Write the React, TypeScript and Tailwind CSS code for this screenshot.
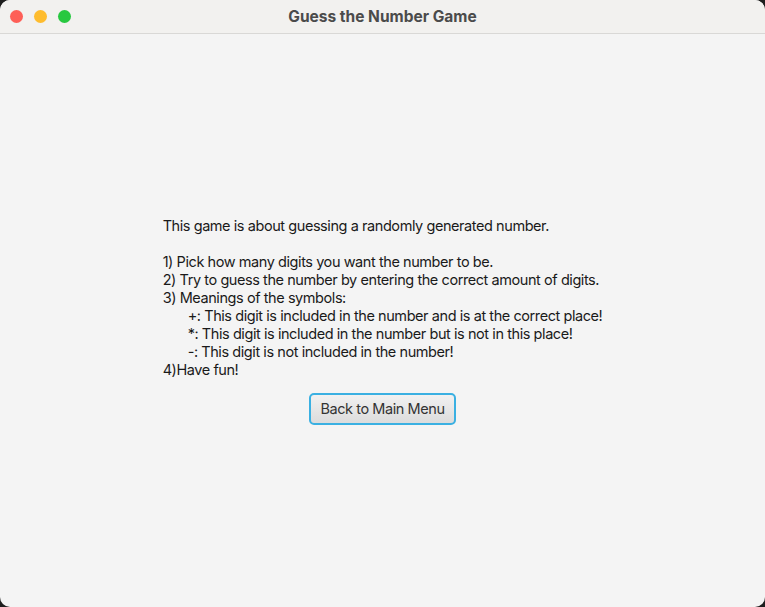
const lines = [
  { text: "This game is about guessing a randomly generated number.", indent: false },
  { text: "\u00a0", indent: false },
  { text: "1) Pick how many digits you want the number to be.", indent: false },
  { text: "2) Try to guess the number by entering the correct amount of digits.", indent: false },
  { text: "3) Meanings of the symbols:", indent: false },
  { text: "+: This digit is included in the number and is at the correct place!", indent: true },
  { text: "*: This digit is included in the number but is not in this place!", indent: true },
  { text: "-: This digit is not included in the number!", indent: true },
  { text: "4)Have fun!", indent: false },
];

export default function App() {
  return (
    <div className="w-[765px] h-[607px] bg-[#1e1e1e]">
      <div className="w-full h-full rounded-[10px] overflow-hidden bg-[#f4f4f4] flex flex-col font-['Inter','Liberation_Sans',sans-serif]">
        {/* title bar */}
        <div className="h-[34px] shrink-0 bg-[#f2f1ef] border-b border-[#d9d8d6] flex items-center relative">
          <div className="flex items-center gap-[11px] pl-[10px]">
            <span className="w-[13px] h-[13px] rounded-full bg-[#fe5f57]" />
            <span className="w-[13px] h-[13px] rounded-full bg-[#febc2e]" />
            <span className="w-[13px] h-[13px] rounded-full bg-[#28c840]" />
          </div>
          <div className="absolute inset-0 flex items-center justify-center text-[15.5px] font-bold text-[#4b4b4b] pointer-events-none">
            Guess the Number Game
          </div>
        </div>

        {/* content */}
        <div className="flex-1 flex flex-col items-center justify-center">
          <div className="text-[14.5px] leading-[18px] text-[#1a1a1a] tracking-[-0.43px]">
            {lines.map((l, i) => (
              <div key={i} className={l.indent ? "pl-[25px]" : ""}>
                {l.text}
              </div>
            ))}
          </div>
          <button className="mt-[14px] h-[32px] px-[9px] rounded-[5px] border-2 border-[#3ab0e2] bg-gradient-to-b from-[#f1f1f1] to-[#dcdcdc] text-[14.5px] text-[#333] tracking-[-0.43px]">
            Back to Main Menu
          </button>
        </div>
      </div>
    </div>
  );
}
